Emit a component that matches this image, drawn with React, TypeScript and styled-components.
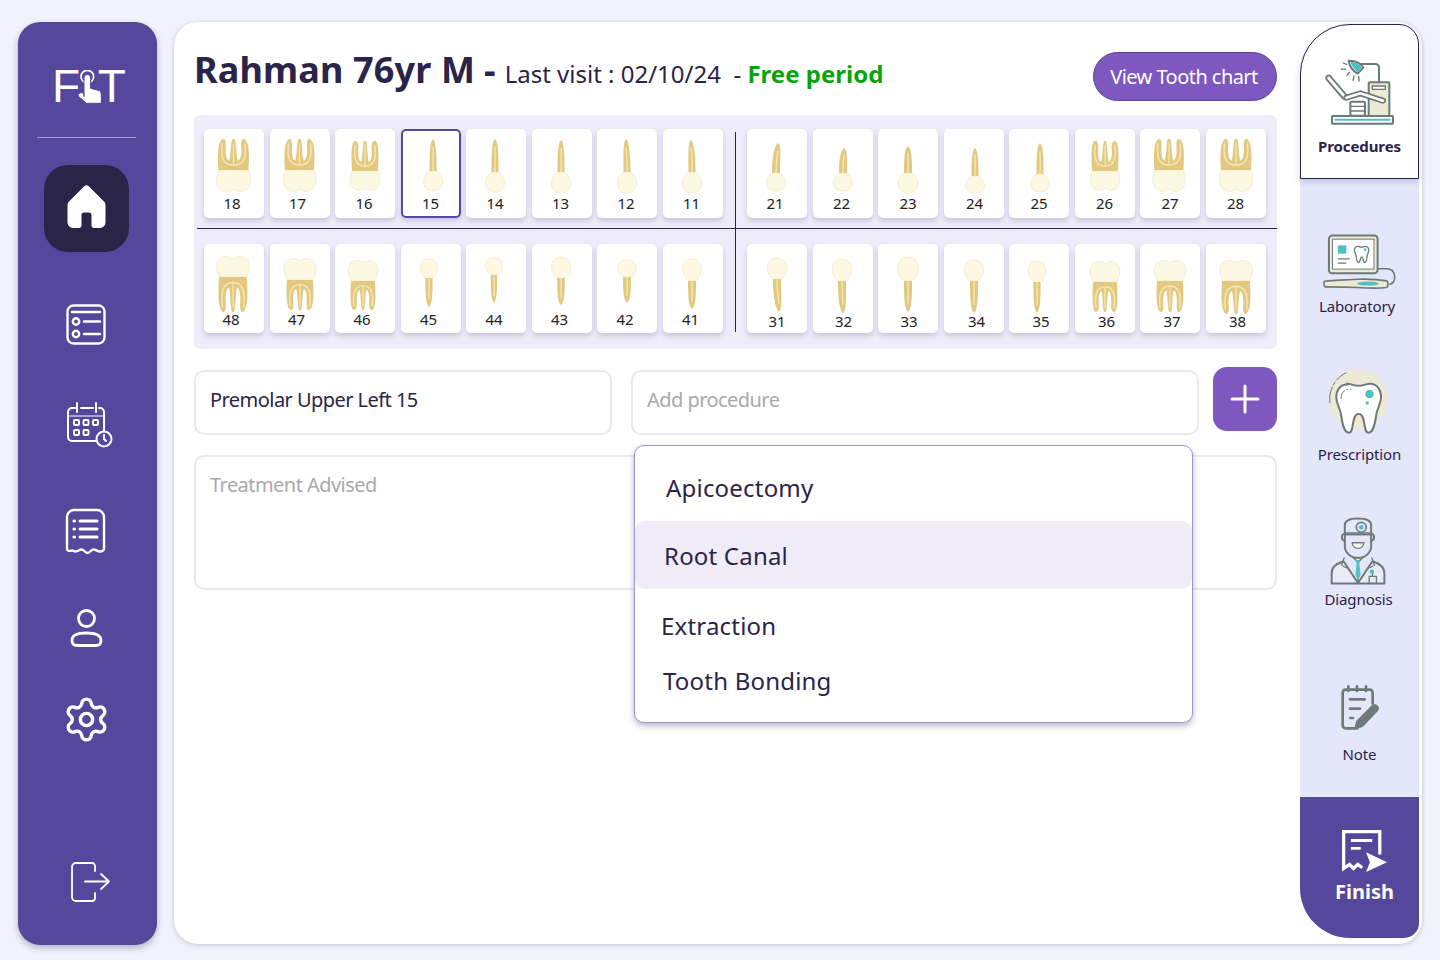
import React from "react";
import styled, { createGlobalStyle } from "styled-components";
import { Settings } from "lucide-react";

const Global = createGlobalStyle`
  html, body { margin: 0; padding: 0; background: #f1f2fc; }
  body { font-family: "Noto Sans", "Open Sans", sans-serif; color: #2a2449; }
  * { box-sizing: border-box; }
`;

const Page = styled.div`
  width: 1440px; height: 960px; display: flex; gap: 17px;
  padding: 22px 18px 15px 18px; overflow: hidden; background: #f1f2fc;
`;
const Sidebar = styled.aside`
  width: 139px; height: 923px; flex: none; background: #54479c; border-radius: 22px;
  box-shadow: 0 3px 6px rgba(40, 36, 80, .3); display: flex; flex-direction: column; align-items: flex-start;
`;
const Logo = styled.div`
  display: flex; align-items: flex-start; margin: 41px 0 0 34px; height: 45px; color: #fff;
  font: 400 46px/46px "Liberation Sans", Arial, sans-serif;
`;
const LogoHand = styled.svg`
  width: 23.300px; height: 35px; margin: 7px -4px 0 -1.700px; flex: none;
`;
const SideRule = styled.div`
  width: 99px; height: 1px; background: #a198d8; margin: 29px 0 0 19px; flex: none;
`;
const HomeButton = styled.div`
  width: 85px; height: 87px; background: #2a2449; border-radius: 24px; margin: 27px 0 0 26px; padding-bottom: 3px;
  display: flex; align-items: center; justify-content: center; flex: none;
`;
const NavSlot = styled.div<{ $top: number; $left: number }>`
  margin: ${p => p.$top}px 0 0 ${p => p.$left}px; display: flex; color: #fff; flex: none;
`;
const Card = styled.main`
  width: 1248px; height: 922px; flex: none; background: #fff; border-radius: 24px;
  box-shadow: 0 1px 5px rgba(40, 36, 80, .22); display: flex; padding: 2px 3px 6px 20px; gap: 23px;
`;
const Content = styled.section`
  width: 1083px; flex: none; display: flex; flex-direction: column;
`;
const Header = styled.header`
  height: 91px; display: flex; justify-content: space-between; align-items: flex-start; flex: none;
`;
const TitleLine = styled.div`
  display: flex; align-items: baseline; margin: 21px 0 0 0; white-space: nowrap;
`;
const Name = styled.span`
  font-size: 36px; line-height: 48px; font-weight: 700; color: #2a2449; letter-spacing: .15px;
`;
const Dash = styled.span`
  font-size: 36px; font-weight: 700; margin: 0 9px;
`;
const Visit = styled.span`
  font-size: 24px; color: #2a2449;
`;
const Free = styled.span`
  font-size: 24px; font-weight: 700; color: #06a40b;
`;
const ChartButton = styled.button`
  width: 184px; height: 49px; margin-top: 28px; border-radius: 25px; background: #7e57bf; border: 1px solid #54479c;
  color: #fff; font: 400 20px "Noto Sans", sans-serif; padding: 0 2px 0 0; letter-spacing: -.55px;
`;
const Chart = styled.div`
  height: 234px; background: #eeecf8; border-radius: 6px; flex: none; display: flex; flex-direction: column;
`;
const ChartRow = styled.div<{ $upper?: boolean }>`
  display: flex; margin-left: 3px;
  ${p => p.$upper ? "border-bottom: 1px solid #2a2449;" : ""}
`;
const Quadrant = styled.div<{ $upper?: boolean; $left?: boolean }>`
  display: grid; grid-template-columns: repeat(8, 60px); column-gap: 5.5px;
  padding: ${p => p.$upper ? "14px 0 10px" : "15px 0 16px"};
  padding-left: ${p => p.$left ? "7px" : "11px"};
`;
const Divider = styled.div<{ $upper?: boolean }>`
  width: 1px; background: #2a2449; margin-left: 12.5px;
  ${p => p.$upper ? "margin-top: 17px;" : "margin-bottom: 17px;"}
`;
const ToothCard = styled.div<{ $selected?: boolean }>`
  width: 60px; height: 89px; background: #fff; border-radius: 5px; display: flex; flex-direction: column;
  align-items: center; box-shadow: 0 3px 5px rgba(70, 60, 140, .22); position: relative;
  ${p => p.$selected ? "outline: 2px solid #54479c; outline-offset: -2px;" : ""}
`;
const ToothSvg = styled.svg`
  width: 60px; height: 64px; flex: none; overflow: visible;
`;
const ToothNum = styled.span<{ $dx: number; $dy: number }>`
  font-size: 15px; line-height: 20px; color: #222; position: relative;
  transform: translate(${p => p.$dx}px, ${p => p.$dy}px);
`;
const Form = styled.div`
  position: relative; padding-top: 21px; display: flex; flex-direction: column; gap: 20px;
`;
const InputRow = styled.div`
  display: flex; align-items: flex-start;
`;
const Field = styled.div<{ $width: number; $height: number; $muted?: boolean }>`
  width: ${p => p.$width}px; height: ${p => p.$height}px; flex: none; border: 2px solid #e9e9eb; border-radius: 10px;
  padding: 13.500px 14px; font-size: 20px; line-height: 28px; letter-spacing: -.55px;
  color: ${p => p.$muted ? "#a9a9ad" : "#2a2449"}; margin-right: 19px;
`;
const PlusButton = styled.button`
  width: 64px; height: 64px; margin: -3px 0 0 -5px; background: #7e57bf; border: 0; border-radius: 14px;
  display: flex; align-items: center; justify-content: center; padding: 0;
`;
const Dropdown = styled.div`
  position: absolute; left: 440px; top: 96px; width: 559px; height: 278px; background: #fff;
  border: 1px solid #9d95cf; border-radius: 10px; box-shadow: 0 3px 6px rgba(50, 45, 110, .35);
`;
const Option = styled.div<{ $h: number; $pt: number; $pl: number; $active?: boolean }>`
  height: ${p => p.$h}px; padding: ${p => p.$pt}px 0 0 ${p => p.$pl}px; display: flex; align-items: center;
  font-size: 24px; letter-spacing: .2px; color: #2a2449; border-radius: 10px; ${p => p.$active ? "background: #efecf8;" : ""}
`;
const Rail = styled.nav`
  width: 119px; flex: none; margin-top: 0; background: #e4e6f9; border-radius: 50px 20px 15px 50px;
  display: flex; flex-direction: column; align-items: center;
`;
const ProcTab = styled.div`
  width: 119px; height: 155px; flex: none; background: #fff; border: 1px solid #2a2449; border-radius: 50px 20px 0 0;
  box-shadow: 0 3px 6px rgba(60, 55, 130, .2); display: flex; flex-direction: column; align-items: center;
  padding-top: 32px; gap: 9px;
`;
const RailItem = styled.div<{ $h: number; $pt: number; $gap: number }>`
  width: 119px; height: ${p => p.$h}px; flex: none; display: flex; flex-direction: column; align-items: center;
  padding-top: ${p => p.$pt}px; gap: ${p => p.$gap}px;
`;
const IconBox = styled.div<{ $dx: number }>`
  display: flex; margin-left: ${p => p.$dx}px;
`;
const RailLabel = styled.span<{ $bold?: boolean; $dx?: number }>`
  font-size: 15px; line-height: 20px; color: #2a2449; font-weight: ${p => p.$bold ? 700 : 400};
  margin-left: ${p => p.$dx ?? 0}px; letter-spacing: -.1px;
`;
const FinishBlock = styled.div`
  width: 119px; flex: 1; background: #54479c; border-radius: 0 0 15px 50px; display: flex; flex-direction: column;
  align-items: center; padding: 32px 0 0 10px; gap: 5px; color: #fff;
`;
const FinishText = styled.span`
  font-size: 20px; line-height: 28px; font-weight: 700; color: #fff;
`;

const GOLD = "#e3c97f";
const PALE = "#f3e6b6";
const CROWN = "#fdf8e2";
const EDGE = "#f6edd2";

type Single = { k: "s"; n: number; cx: number; tip: number; neck: number; end: number; cw: number; rw?: number; tilt?: number; dx?: number; dy?: number };
type Molar = { k: "m"; n: number; cx: number; tip: number; neck: number; end: number; cw: number; w: number; sharp?: boolean; dx?: number; dy?: number };
type Tooth = Single | Molar;

function SingleShape({ t }: { t: Single }) {
  const rw = t.rw ?? 3.5;
  const dir = t.end > t.neck ? 1 : -1;
  const tx = t.cx + (t.tilt ?? 0);
  const mid = (t.neck + t.tip) / 2;
  const c0 = t.neck + dir * 5;
  const cw = t.cw * 1.15;
  const root = `M${t.cx - rw} ${t.neck} C${t.cx - rw} ${mid} ${tx - rw * .95} ${t.tip + dir * 3} ${tx} ${t.tip} C${tx + rw * .95} ${t.tip + dir * 3} ${t.cx + rw} ${mid} ${t.cx + rw} ${t.neck} Z`;
  const crown = `M${t.cx - rw} ${t.neck} C${t.cx - cw} ${c0} ${t.cx - cw - 1} ${t.end} ${t.cx} ${t.end} C${t.cx + cw + 1} ${t.end} ${t.cx + cw} ${c0} ${t.cx + rw} ${t.neck} Z`;
  return (
    <>
      <path d={crown} fill={CROWN} stroke={EDGE} strokeWidth="1" />
      <path d={root} fill={GOLD} />
      <path d={`M${t.cx} ${t.neck} Q${t.cx + .4} ${mid} ${tx} ${t.tip + (t.neck - t.tip) * .25}`} stroke={PALE} strokeWidth="1.400" fill="none" />
    </>
  );
}

function MolarShape({ t }: { t: Molar }) {
  const { cx, w, cw, neck, tip, end } = t;
  const y = (f: number) => neck + (tip - neck) * f;
  const c = (f: number) => neck + (end - neck) * f;
  const o = t.sharp ? .82 : .72;
  const crown = `M${cx - w} ${neck} C${cx - w - 1} ${c(.2)} ${cx - cw - 3} ${c(.5)} ${cx - cw - .5} ${c(.75)} C${cx - cw + 1} ${c(1)} ${cx - cw * .45} ${c(1.05)} ${cx - cw * .25} ${end} C${cx - cw * .1} ${c(.97)} ${cx - cw * .05} ${c(.92)} ${cx} ${c(.92)} C${cx + cw * .05} ${c(.92)} ${cx + cw * .1} ${c(.97)} ${cx + cw * .25} ${end} C${cx + cw * .45} ${c(1.05)} ${cx + cw - 1} ${c(1)} ${cx + cw + .5} ${c(.75)} C${cx + cw + 3} ${c(.5)} ${cx + w + 1} ${c(.2)} ${cx + w} ${neck} Z`;
  const L = (k: number) => cx - w * k;
  const R = (k: number) => cx + w * k;
  const roots = `M${L(1)} ${neck} C${L(1.06)} ${y(.45)} ${L(1.08)} ${y(.9)} ${L(o)} ${y(1)} C${L(.5)} ${y(1.02)} ${L(.5)} ${y(.85)} ${L(.52)} ${y(.7)} C${L(.56)} ${y(.5)} ${L(.45)} ${y(.32)} ${L(.3)} ${y(.3)} C${L(.18)} ${y(.4)} ${L(.2)} ${y(.8)} ${L(.1)} ${y(.98)} Q${cx} ${y(1.03)} ${R(.1)} ${y(.98)} C${R(.2)} ${y(.8)} ${R(.18)} ${y(.4)} ${R(.3)} ${y(.3)} C${R(.45)} ${y(.32)} ${R(.56)} ${y(.5)} ${R(.52)} ${y(.7)} C${R(.5)} ${y(.85)} ${R(.5)} ${y(1.02)} ${R(o)} ${y(1)} C${R(1.08)} ${y(.9)} ${R(1.06)} ${y(.45)} ${R(1)} ${neck} Z`;
  const pulp = `M${L(.76)} ${y(.85)} C${L(.85)} ${y(.5)} ${L(.8)} ${y(.16)} ${cx} ${y(.16)} C${R(.8)} ${y(.16)} ${R(.85)} ${y(.5)} ${R(.76)} ${y(.85)}`;
  return (
    <>
      <path d={crown} fill={CROWN} stroke={EDGE} strokeWidth="1" />
      <path d={roots} fill={GOLD} />
      <path d={pulp} fill="none" stroke={PALE} strokeWidth="1.500" strokeLinecap="round" />
      <path d={`M${cx} ${y(.16)} V${y(.85)}`} fill="none" stroke={PALE} strokeWidth="1.300" strokeLinecap="round" />
    </>
  );
}

const upperLeft: Tooth[] = [
  { k: "m", n: 18, cx: 29.500, tip: 10, neck: 41, end: 62, cw: 15.500, w: 15, dx: -2 },
  { k: "m", n: 17, cx: 29.5, tip: 10, neck: 41, end: 62, cw: 14.5, w: 14.5, dx: -2 },
  { k: "m", n: 16, cx: 30, tip: 12, neck: 42, end: 61, cw: 13, w: 13, sharp: true, dx: -1 },
  { k: "s", n: 15, cx: 32, tip: 10, neck: 42, end: 62, cw: 10, dx: 0 },
  { k: "s", n: 14, cx: 29, tip: 10, neck: 43, end: 63, cw: 10, dx: -1 },
  { k: "s", n: 13, cx: 29, tip: 11, neck: 43, end: 64, cw: 10, dx: -1 },
  { k: "s", n: 12, cx: 30, tip: 10, neck: 43, end: 64, cw: 10, tilt: -1, dx: -1 },
  { k: "s", n: 11, cx: 29, tip: 11, neck: 43, end: 64, cw: 10, tilt: -1, dx: -1 },
];
const upperRight: Tooth[] = [
  { k: "s", n: 21, cx: 29, tip: 14, neck: 44, end: 62, cw: 10, rw: 4, tilt: 2, dx: -2 },
  { k: "s", n: 22, cx: 30, tip: 19, neck: 44, end: 62, cw: 10, rw: 4, tilt: 1, dx: -1 },
  { k: "s", n: 23, cx: 30, tip: 17, neck: 44, end: 64, cw: 10.5, rw: 4 },
  { k: "s", n: 24, cx: 31, tip: 19, neck: 47, end: 64, cw: 10, dx: 1 },
  { k: "s", n: 25, cx: 31, tip: 14, neck: 45, end: 63, cw: 10 },
  { k: "m", n: 26, cx: 30, tip: 12, neck: 42, end: 61, cw: 13, w: 13, sharp: true },
  { k: "m", n: 27, cx: 29, tip: 10, neck: 41, end: 62, cw: 14.5, w: 14.5 },
  { k: "m", n: 28, cx: 30, tip: 10, neck: 41, end: 62, cw: 15, w: 15 },
];
const lowerLeft: Tooth[] = [
  { k: "m", n: 48, cx: 29, tip: 68, neck: 33, end: 13, cw: 15, w: 14, dx: -3, dy: 1 },
  { k: "m", n: 47, cx: 30, tip: 66, neck: 36, end: 15, cw: 14.5, w: 13, dx: -3, dy: 1 },
  { k: "m", n: 46, cx: 28, tip: 66, neck: 37, end: 17, cw: 13.5, w: 12, sharp: true, dx: -3, dy: 1 },
  { k: "s", n: 45, cx: 28, tip: 63, neck: 34, end: 15, cw: 9, rw: 3.6, dx: -2, dy: 1 },
  { k: "s", n: 44, cx: 28, tip: 59, neck: 31, end: 14, cw: 9, rw: 3.2, dx: -2, dy: 1 },
  { k: "s", n: 43, cx: 29, tip: 61, neck: 34, end: 13, cw: 10, rw: 3.8, dx: -2, dy: 1 },
  { k: "s", n: 42, cx: 30, tip: 59, neck: 33, end: 16, cw: 9.5, rw: 4, dx: -2, dy: 1 },
  { k: "s", n: 41, cx: 29, tip: 65, neck: 37, end: 15, cw: 9.5, rw: 4, dx: -2, dy: 1 },
];
const lowerRight: Tooth[] = [
  { k: "s", n: 31, cx: 30, tip: 68, neck: 35, end: 14, cw: 10, rw: 4, tilt: 2, dy: 3 },
  { k: "s", n: 32, cx: 29, tip: 69, neck: 37, end: 15, cw: 10, rw: 4, tilt: 1, dx: 1, dy: 3 },
  { k: "s", n: 33, cx: 30, tip: 68, neck: 37, end: 13, cw: 11, rw: 4, dx: 1, dy: 3 },
  { k: "s", n: 34, cx: 30, tip: 69, neck: 37, end: 16, cw: 10, rw: 4, dx: 3, dy: 3 },
  { k: "s", n: 35, cx: 28, tip: 69, neck: 38, end: 17, cw: 9, rw: 3.6, dx: 2, dy: 3 },
  { k: "m", n: 36, cx: 30, tip: 68, neck: 38, end: 18, cw: 13.5, w: 12, sharp: true, dx: 2, dy: 3 },
  { k: "m", n: 37, cx: 30, tip: 68, neck: 37, end: 17, cw: 14.5, w: 13, dx: 2, dy: 3 },
  { k: "m", n: 38, cx: 30, tip: 70, neck: 37, end: 17, cw: 15, w: 14, dx: 2, dy: 3 },
];

function ToothTile({ t }: { t: Tooth }) {
  return (
    <ToothCard $selected={t.n === 15}>
      <ToothSvg viewBox="0 0 60 64">
        {t.k === "s" ? <SingleShape t={t} /> : <MolarShape t={t} />}
      </ToothSvg>
      <ToothNum $dx={t.dx ?? 0} $dy={t.dy ?? 0}>{t.n}</ToothNum>
    </ToothCard>
  );
}

const IconStroke = { fill: "none", stroke: "#fff", strokeWidth: 2.4, strokeLinecap: "round", strokeLinejoin: "round" } as const;

const ListIcon = () => (
  <svg width="40" height="41" viewBox="0 0 40 41" {...IconStroke}>
    <rect x="1.500" y="1.500" width="37" height="38" rx="6" />
    <path d="M6 8h28M18 17.500h16M18 30h16" />
    <circle cx="10" cy="17.500" r="3.200" />
    <circle cx="10" cy="30" r="3.200" />
  </svg>
);
const CalendarIcon = () => (
  <svg width="46" height="46" viewBox="0 0 46 46" {...IconStroke} strokeWidth={2}>
    <path d="M29 39H5a4 4 0 0 1-4-4V10a4 4 0 0 1 4-4h3M14 6h12M32 6h1a4 4 0 0 1 4 4v19" />
    <path d="M10 1v9M29 1v9" />
    <path d="M1 14h36" strokeWidth="1.200" />
    <rect x="7" y="18" width="5" height="5" rx="1.200" />
    <rect x="16.500" y="18" width="5" height="5" rx="1.200" />
    <rect x="26" y="18" width="5" height="5" rx="1.200" />
    <rect x="7" y="28" width="5" height="5" rx="1.200" />
    <rect x="16.500" y="28" width="5" height="5" rx="1.200" />
    <circle cx="37" cy="37" r="7.500" />
    <path d="M37 33v4l2 2" />
  </svg>
);
const ReceiptIcon = () => (
  <svg width="41" height="47" viewBox="0 0 41 47" {...IconStroke}>
    <path d="M2 41V9a7 7 0 0 1 7-7h23a7 7 0 0 1 7 7v32c-.5 2-2 2.500-4 2.500-3 0-4-2-6.500-2-2.500 0-3.500 3.500-6 3.500-2.500 0-3.500-3.500-6-3.500-2.500 0-3.500 2-6 2-2 0-2-1-3-1-1.500 0-3 1-4.500 0-.7-.5-1-1-1-1.500z" />
    <path d="M15 13h17M15 21h17M15 29h17" strokeWidth="3" />
    <path d="M9 13h.5M9 21h.5M9 29h.5" strokeWidth="3.200" />
  </svg>
);
const UserIcon = () => (
  <svg width="33" height="38" viewBox="0 0 33 38" {...IconStroke} strokeWidth={2.800}>
    <circle cx="16.500" cy="9.500" r="8" />
    <path d="M16.500 24C10 24 2 25 2 31.500 2 35 4 36.500 7 36.500h19c3 0 5-1.500 5-5C31 25 23 24 16.500 24z" />
  </svg>
);
const LogoutIcon = () => (
  <svg width="40" height="40" viewBox="0 0 40 40" {...IconStroke} strokeWidth={1.800}>
    <path d="M24 9V4a3 3 0 0 0-3-3H5a4 4 0 0 0-4 4v30a4 4 0 0 0 4 4h16a3 3 0 0 0 3-3v-5" />
    <path d="M14 19.500h24M30 12l8 7.500-8 7.500" />
  </svg>
);
const HomeIcon = () => (
  <svg width="39" height="44" viewBox="0 0 39 44" fill="#fff">
    <path d="M17 1.500a3.500 3.500 0 0 1 5 0l15 15c1 1 1.500 2.500 1.500 4V37c0 3.500-2.500 6-6 6H27c-1.500 0-2.500-1-2.500-2.500V30c0-1.500-1-2.500-2.500-2.500h-5c-1.500 0-2.500 1-2.500 2.500v10.500C14.500 42 13.500 43 12 43H6.500C3 43 .5 40.500 .5 37V20.500c0-1.500 .5-3 1.500-4z" />
  </svg>
);

const G = "#6d7a78";
const T = "#4fc1c4";
const B = "#ece9d5";

const ChairIcon = () => (
  <svg width="74" height="70" viewBox="88 120 222 210">
    <g fill="none" stroke={G} strokeWidth="6" strokeLinejoin="round" strokeLinecap="round">
      <rect x="225" y="196" width="62" height="102" rx="4" fill={B} />
      <rect x="236" y="207" width="39" height="10" fill="#fff" strokeWidth="4" />
      <path d="M196 141h48q12 0 12 12v43" />
      <rect x="170" y="254" width="44" height="42" rx="5" fill="#fff" />
      <path d="M170 268h44M170 282h44" strokeWidth="4" />
      <rect x="115" y="297" width="183" height="23" rx="2" fill="#fff" />
      <path d="M165 131c22-1 40 12 44 21l-17 18c-14-7-26-24-27-39z" fill="#fff" />
      <path d="M149 138l10 4M143 156l13 1M160 176l7-10M178 190l3-13M196 192l-1-14" strokeWidth="4" />
    </g>
    <path d="M170 134c18 1 30 10 35 18l-13 14c-9-8-19-20-22-32z" fill={T} />
    <path d="M122 308h168" stroke={T} strokeWidth="6" />
    <path d="M105 183l47 55" stroke={G} strokeWidth="20" strokeLinecap="round" />
    <path d="M105 183l47 55" stroke="#fff" strokeWidth="9" strokeLinecap="round" />
    <path d="M158 242l42-13 68 22" fill="none" stroke={G} strokeWidth="18" strokeLinecap="round" strokeLinejoin="round" />
    <path d="M158 242l42-13 68 22" fill="none" stroke="#fff" strokeWidth="8" strokeLinecap="round" strokeLinejoin="round" />
  </svg>
);
const LabIcon = () => (
  <svg width="74" height="57" viewBox="85 658 225 172">
    <rect x="103" y="662" width="148" height="115" rx="10" fill={B} stroke={G} strokeWidth="6" />
    <rect x="114" y="673" width="126" height="91" fill="#fff" stroke={G} strokeWidth="3" />
    <rect x="130" y="692" width="26" height="25" fill={T} />
    <path d="M130 733h36M130 746h26" stroke={G} strokeWidth="4" />
    <path d="M190 695c6 0 8 3 12 3s6-3 12-3c8 0 11 8 10 14-1 6-4 9-5 17-1 7-2 18-7 18-6 0-4-17-9-17s-4 17-10 17c-5 0-6-11-7-18-1-8-4-11-5-17-1-6 1-14 9-14z" fill="#fff" stroke={G} strokeWidth="4" />
    <circle cx="213" cy="705" r="4" fill={T} />
    <path d="M251 763h26c18 0 26 10 26 26 0 14-8 20-16 22" fill="none" stroke={G} strokeWidth="5" />
    <path d="M90 801c30-4 70-4 100-6 30-1 60 0 88 5 6 1 6 18 0 20-28 4-60 2-90 0-30-2-68-2-96-2-4 0-6-16-2-17z" fill={B} stroke={G} strokeWidth="5" />
    <ellipse cx="222" cy="808" rx="34" ry="6" fill={T} />
  </svg>
);
const ToothIcon = () => (
  <svg width="62" height="66" viewBox="94 58 188 198">
    <circle cx="188" cy="148" r="90" fill={B} />
    <path d="M103 160c-6-40 18-78 50-92" fill="none" stroke={G} strokeWidth="3" strokeDasharray="50 6 12 6" />
    <path d="M155 102c13 0 22 6 35 6s22-6 35-6c22 0 33 20 33 40 0 20-10 30-14 50-3 18-7 58-24 58-18 0-7-57-30-57s-12 57-30 57c-17 0-21-40-24-58-4-20-14-30-14-50 0-20 11-38 33-38z" fill="#fff" stroke={G} strokeWidth="6" />
    <path d="M137 148c-2-18 8-30 30-30" fill="none" stroke={G} strokeWidth="3" strokeDasharray="30 5 6 5" />
    <circle cx="223" cy="133" r="13" fill={T} />
    <circle cx="216" cy="160" r="5" fill={T} />
  </svg>
);
const DoctorIcon = () => (
  <svg width="56" height="70" viewBox="103 503 170 208">
    <g fill="none" stroke={G} strokeWidth="6" strokeLinejoin="round" strokeLinecap="round">
      <path d="M108 706v-32c0-20 14-28 36-36l44 66 44-66c22 8 36 16 36 36v32z" fill="#e8eaf8" />
      <path d="M162 616l26 25 26-25" fill={B} strokeWidth="4" />
      <path d="M148 556h80v36c0 20-18 36-40 36s-40-16-40-36z" fill="#e4e6f9" />
      <path d="M148 575c-12 0-12-20 0-20M228 575c12 0 12-20 0-20" />
      <path d="M148 556v-28c0-14 12-20 40-20s40 6 40 20v28z" fill="#e4e6f9" />
      <path d="M150 552h76" strokeWidth="4" />
      <circle cx="198" cy="535" r="15" fill="#e4e6f9" strokeWidth="5" />
      <path d="M170 582h36c-2 12-8 17-18 17s-16-5-18-17z" fill="#fff" strokeWidth="4" />
      <path d="M146 628l-8 22 22 12M230 628l8 22-22 12" strokeWidth="4" strokeDasharray="10 5" />
      <path d="M188 640v66M222 706v-22h22v22M232 684v-10" strokeWidth="4" />
    </g>
    <circle cx="198" cy="535" r="7" fill={T} />
    <path d="M181 634h14l-3 12 4 34-8 14-8-14 4-34z" fill={T} />
    <circle cx="230" cy="670" r="7" fill={T} />
  </svg>
);
const NoteIcon = () => (
  <svg width="40" height="46" viewBox="143 74 120 138">
    <path d="M192 204h-34c-6 0-10-4-10-10V98c0-6 4-10 10-10h70c6 0 10 4 10 10v32" fill="none" stroke={G} strokeWidth="8" strokeLinecap="round" />
    <path d="M165 78v14M191 78v14M218 78v14" stroke={G} strokeWidth="8" strokeLinecap="round" />
    <path d="M170 117h44M170 145h30M171 173h8" stroke={G} strokeWidth="8" strokeLinecap="round" />
    <path d="M236 134c6-5 14-2 18 2 4 5 4 12-1 17l-42 44c-4 4-20 9-25 8-2-1-1-15 3-24z" fill={G} />
  </svg>
);
const FinishIcon = () => (
  <svg width="46" height="44" viewBox="138 510 140 132">
    <path d="M200 627l-14-10-13 12-12-12-18 12V517h110v70" fill="none" stroke="#fff" strokeWidth="10" />
    <path d="M165 544h65M165 568h30" stroke="#fff" strokeWidth="9" />
    <path d="M211 580l64 30-64 30 12-30z" fill="#fff" />
  </svg>
);

export default function App() {
  return (
    <>
      <Global />
      <Page>
        <Sidebar>
          <Logo>
            <span>F</span>
            <LogoHand viewBox="100 30 70 105">
              <circle cx="128" cy="50" r="19" fill="none" stroke="#fff" strokeWidth="5" />
              <path d="M118 110V54c0-14 20-14 20 0v31l27 7c3 2 5 6 5 13v25h-45l-25-22c2-10 8-12 18-8z" fill="#fff" stroke="#54479c" strokeWidth="3" />
            </LogoHand>
            <span>T</span>
          </Logo>
          <SideRule />
          <HomeButton><HomeIcon /></HomeButton>
          <NavSlot $top={52} $left={48}><ListIcon /></NavSlot>
          <NavSlot $top={57} $left={49}><CalendarIcon /></NavSlot>
          <NavSlot $top={60} $left={47}><ReceiptIcon /></NavSlot>
          <NavSlot $top={54} $left={52}><UserIcon /></NavSlot>
          <NavSlot $top={48} $left={44}><Settings size={49} strokeWidth={1.700} /></NavSlot>
          <NavSlot $top={118} $left={53}><LogoutIcon /></NavSlot>
        </Sidebar>
        <Card>
          <Content>
            <Header>
              <TitleLine>
                <Name>Rahman 76yr M</Name>
                <Dash>-</Dash>
                <Visit>Last visit : 02/10/24&nbsp;&nbsp;-&nbsp;</Visit>
                <Free>Free period</Free>
              </TitleLine>
              <ChartButton>View Tooth chart</ChartButton>
            </Header>
            <Chart>
              <ChartRow $upper>
                <Quadrant $upper $left>{upperLeft.map(t => <ToothTile key={t.n} t={t} />)}</Quadrant>
                <Divider $upper />
                <Quadrant $upper>{upperRight.map(t => <ToothTile key={t.n} t={t} />)}</Quadrant>
              </ChartRow>
              <ChartRow>
                <Quadrant $left>{lowerLeft.map(t => <ToothTile key={t.n} t={t} />)}</Quadrant>
                <Divider />
                <Quadrant>{lowerRight.map(t => <ToothTile key={t.n} t={t} />)}</Quadrant>
              </ChartRow>
            </Chart>
            <Form>
              <InputRow>
                <Field $width={418} $height={65}>Premolar Upper Left 15</Field>
                <Field $width={568} $height={65} $muted>Add procedure</Field>
                <PlusButton aria-label="Add">
                  <svg width="30" height="30" viewBox="0 0 30 30" fill="none" stroke="#fff" strokeWidth="3" strokeLinecap="round">
                    <path d="M15 2v26M2 15h26" />
                  </svg>
                </PlusButton>
              </InputRow>
              <Field $width={1083} $height={135} $muted>Treatment Advised</Field>
              <Dropdown>
                <Option $h={75} $pt={7} $pl={31}>Apicoectomy</Option>
                <Option $h={68} $pt={0} $pl={29} $active>Root Canal</Option>
                <Option $h={65} $pt={8} $pl={26}>Extraction</Option>
                <Option $h={53} $pt={0} $pl={28}>Tooth Bonding</Option>
              </Dropdown>
            </Form>
          </Content>
          <Rail>
            <ProcTab>
              <ChairIcon />
              <RailLabel $bold>Procedures</RailLabel>
            </ProcTab>
            <RailItem $h={153} $pt={55} $gap={5}>
              <LabIcon />
              <RailLabel $dx={-5}>Laboratory</RailLabel>
            </RailItem>
            <RailItem $h={151} $pt={37} $gap={9}>
              <IconBox $dx={-4}><ToothIcon /></IconBox>
              <RailLabel>Prescription</RailLabel>
            </RailItem>
            <RailItem $h={155} $pt={33} $gap={3}>
              <IconBox $dx={-3}><DoctorIcon /></IconBox>
              <RailLabel $dx={-2}>Diagnosis</RailLabel>
            </RailItem>
            <RailItem $h={159} $pt={47} $gap={13}>
              <IconBox $dx={3}><NoteIcon /></IconBox>
              <RailLabel>Note</RailLabel>
            </RailItem>
            <FinishBlock>
              <FinishIcon />
              <FinishText>Finish</FinishText>
            </FinishBlock>
          </Rail>
        </Card>
      </Page>
    </>
  );
}
